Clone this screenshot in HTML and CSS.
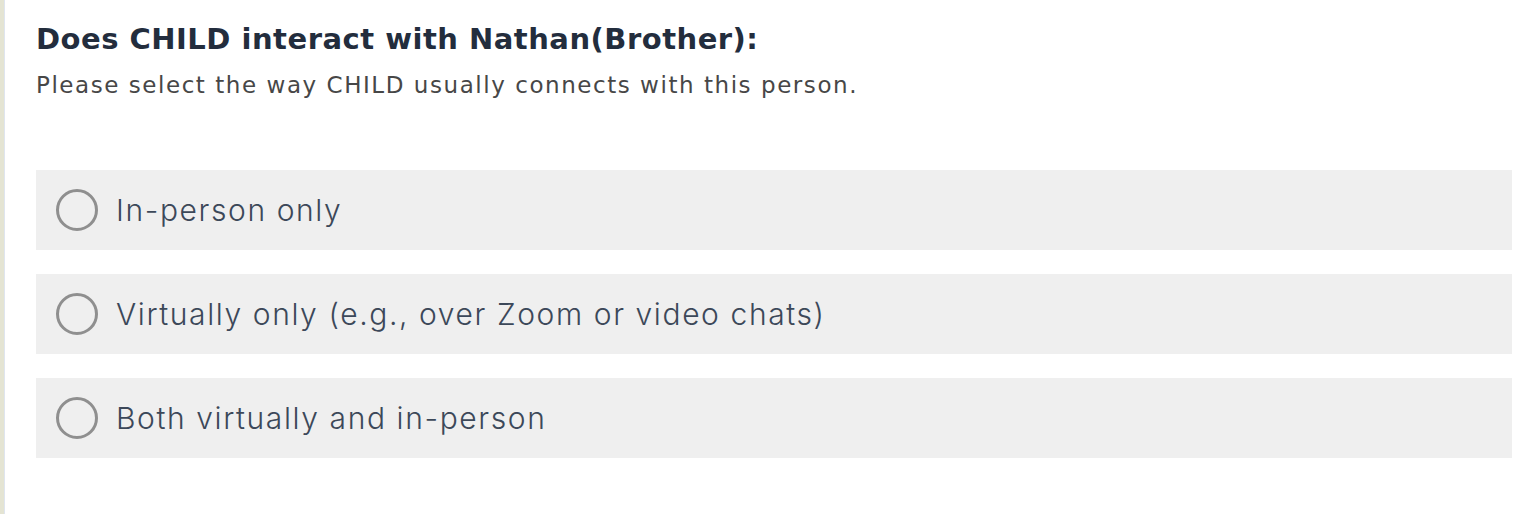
FILE: index.html
```html
<!DOCTYPE html>
<html lang="en">
<head>
<meta charset="utf-8">
<link rel="stylesheet" href="styles.css">
</head>
<body>
<div class="page">
  <div class="question">
    <h1 class="title">Does CHILD interact with Nathan(Brother):</h1>
    <p class="subtitle">Please select the way CHILD usually connects with this person.</p>
    <div class="options">
      <label class="option"><span class="radio"></span><span class="label">In-person only</span></label>
      <label class="option"><span class="radio"></span><span class="label">Virtually only (e.g., over Zoom or video chats)</span></label>
      <label class="option"><span class="radio"></span><span class="label">Both virtually and in-person</span></label>
    </div>
  </div>
</div>
</body>
</html>
```
FILE: styles.css
```css
html, body {
  margin: 0;
  padding: 0;
  background: #ffffff;
}
.page {
  min-height: 514px;
  box-sizing: border-box;
  border-left: 4px solid #e4e4d3;
  display: flex;
}
.question {
  flex: 1;
  border-left: 1px solid #dfe5ef;
  padding: 19px 26px 0 31px;
  font-family: "DejaVu Sans", "Liberation Sans", sans-serif;
}
.title {
  margin: 0;
  font-size: 29px;
  line-height: 40px;
  font-weight: 700;
  letter-spacing: 0.5px;
  color: #232d3d;
}
.subtitle {
  margin: 11px 0 0 0;
  font-size: 23px;
  line-height: 30px;
  font-weight: 400;
  letter-spacing: 1.55px;
  color: #474747;
}
.options {
  margin-top: 70px;
  display: flex;
  flex-direction: column;
  gap: 24px;
}
.option {
  display: flex;
  align-items: center;
  height: 80px;
  background: #efefef;
  padding-left: 20px;
  gap: 18px;
}
.radio {
  width: 42px;
  height: 42px;
  box-sizing: border-box;
  border: 3.5px solid #8f8f8f;
  border-radius: 50%;
  background: transparent;
  flex: none;
}
.label {
  font-family: "Inter", "DejaVu Sans", sans-serif;
  font-size: 30px;
  font-weight: 300;
  letter-spacing: 1.6px;
  color: #3c4859;
}
```
